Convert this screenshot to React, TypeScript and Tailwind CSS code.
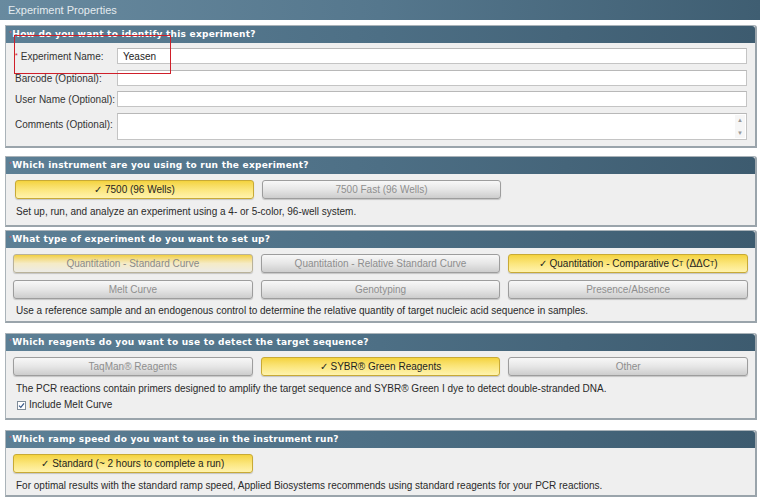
import React from "react";

type Variant = "yellow" | "pale" | "gray";

const variants: Record<Variant, string> = {
  yellow:
    "border-[#c8aa36] bg-linear-to-b from-[#f4d33c] via-[#fbe67c] to-[#fff3ad] text-[#1e1e1e]",
  pale: "border-[#b9b29a] bg-linear-to-b from-[#f2cf3a] via-[#f5ebc6] to-[#ecebe6] text-[#8a8a8a]",
  gray: "border-[#9d9d9d] bg-linear-to-b from-[#f8f8f8] via-[#e6e6e6] to-[#cdcdcd] text-[#8e8e8e]",
};

function Btn({ children, variant = "gray" }: { children: React.ReactNode; variant?: Variant }) {
  return (
    <div
      className={`h-[19px] rounded-[3px] border flex items-center justify-center text-[10px] shadow-[0_1px_1px_rgba(0,0,0,0.18)] ${variants[variant]}`}
    >
      {children}
    </div>
  );
}

function Panel({
  title,
  children,
  className = "",
}: {
  title: string;
  children: React.ReactNode;
  className?: string;
}) {
  return (
    <section
      className={`ml-[5px] mr-[3px] border border-[#aab3b9] border-r-2 border-b-2 border-r-[#9aa4ab] border-b-[#9aa4ab] bg-[#efefef] rounded-tr-[3px] ${className}`}
    >
      <div className="h-[17px] flex items-center pl-[3px] bg-linear-to-r from-[#5c7f95] via-[#4d6f85] to-[#3d5b6f] rounded-tr-[3px]">
        <span className="text-[#e0566a] text-[6px] leading-none mr-[1px] -mt-[4px]">*</span>
        <span className="font-['DejaVu_Sans',Verdana,sans-serif] font-bold text-[9px] text-white tracking-[0.25px]">
          {title}
        </span>
      </div>
      {children}
    </section>
  );
}

function Field({ label, tall, className = "" }: { label: string; tall?: boolean; className?: string }) {
  return (
    <div className={`flex ${tall ? "items-start" : "items-center"} ${className}`}>
      <div className={`w-[102px] text-[10px] text-[#333] ${tall ? "pt-[4px]" : ""}`}>{label}</div>
      <div
        className={`flex-1 bg-white border border-[#c4c4c4] border-t-[#b8b8b8] ${tall ? "h-[27px] relative" : "h-[16px]"}`}
      >
        {tall ? (
          <div className="absolute right-[1px] top-[1px] bottom-[1px] w-[10px] flex flex-col justify-between items-center text-[#999] text-[6px] leading-[10px] bg-[#f6f6f6]">
            <span>▲</span>
            <span>▼</span>
          </div>
        ) : null}
      </div>
    </div>
  );
}

function Desc({ children }: { children: React.ReactNode }) {
  return <p className="pl-[3px] text-[10px] leading-[14px] text-[#2a2a2a]">{children}</p>;
}

export default function App() {
  return (
    <div className="relative w-[760px] h-[498px] overflow-hidden bg-white font-['Liberation_Sans',Arial,sans-serif]">
      {/* title bar */}
      <div className="h-[20px] flex items-center pl-[8px] bg-linear-to-r from-[#688a9f] via-[#55778d] to-[#3f5e72]">
        <span className="text-[11px] text-[#e4ebef]">Experiment Properties</span>
      </div>

      {/* identify */}
      <Panel title="How do you want to identify this experiment?" className="mt-[5px]">
        <div className="pl-[9px] pr-[8px] pt-[5px] pb-[6px] flex flex-col">
          <div className="flex items-center">
            <div className="w-[102px] text-[10px] text-[#333] flex items-center">
              <span className="text-[#d0202a] text-[7px] mr-[3px]">*</span>
              Experiment Name:
            </div>
            <div className="flex-1 h-[16px] bg-white border border-[#c4c4c4] border-t-[#b8b8b8] flex items-center pl-[5px] text-[10px] text-[#222]">
              Yeasen
            </div>
          </div>
          <Field label="Barcode (Optional):" className="mt-[6px]" />
          <Field label="User Name (Optional):" className="mt-[5px]" />
          <Field label="Comments (Optional):" tall className="mt-[6px]" />
        </div>
      </Panel>

      {/* instrument */}
      <Panel title="Which instrument are you using to run the experiment?" className="mt-[8px]">
        <div className="px-[7px] pt-[6px] pb-[6px]">
          <div className="grid grid-cols-3 gap-x-[8px] pl-[2px]">
            <Btn variant="yellow">✓ 7500 (96 Wells)</Btn>
            <Btn>7500 Fast (96 Wells)</Btn>
          </div>
          <div className="mt-[6px]">
            <Desc>Set up, run, and analyze an experiment using a 4- or 5-color, 96-well system.</Desc>
          </div>
        </div>
      </Panel>

      {/* experiment type */}
      <Panel title="What type of experiment do you want to set up?" className="mt-[3px]">
        <div className="px-[7px] pt-[6px] pb-[3px]">
          <div className="grid grid-cols-3 gap-x-[8px] gap-y-[7px]">
            <Btn variant="pale">Quantitation - Standard Curve</Btn>
            <Btn>Quantitation - Relative Standard Curve</Btn>
            <Btn variant="yellow">
              ✓ Quantitation - Comparative C<span className="text-[7px] mt-[2px]">T</span>&nbsp;(ΔΔC
              <span className="text-[7px] mt-[2px]">T</span>)
            </Btn>
            <Btn>Melt Curve</Btn>
            <Btn>Genotyping</Btn>
            <Btn>Presence/Absence</Btn>
          </div>
          <div className="mt-[5px]">
            <Desc>
              Use a reference sample and an endogenous control to determine the relative quantity of target nucleic
              acid sequence in samples.
            </Desc>
          </div>
        </div>
      </Panel>

      {/* reagents */}
      <Panel title="Which reagents do you want to use to detect the target sequence?" className="mt-[10px]">
        <div className="px-[7px] pt-[6px] pb-[6px]">
          <div className="grid grid-cols-3 gap-x-[8px]">
            <Btn>TaqMan® Reagents</Btn>
            <Btn variant="yellow">✓ SYBR® Green Reagents</Btn>
            <Btn>Other</Btn>
          </div>
          <div className="mt-[6px]">
            <Desc>
              The PCR reactions contain primers designed to amplify the target sequence and SYBR® Green I dye to
              detect double-stranded DNA.
            </Desc>
          </div>
          <label className="mt-[2px] pl-[4px] flex items-center gap-[3px] text-[10px] leading-[14px] text-[#2a2a2a]">
            <span className="w-[9px] h-[9px] border border-[#7f8c98] bg-white flex items-center justify-center">
              <svg width="7" height="7" viewBox="0 0 7 7">
                <path d="M1 3.6 L2.8 5.4 L6 1.4" fill="none" stroke="#3a5a8a" strokeWidth="1.3" />
              </svg>
            </span>
            Include Melt Curve
          </label>
        </div>
      </Panel>

      {/* ramp speed */}
      <Panel title="Which ramp speed do you want to use in the instrument run?" className="mt-[10px]">
        <div className="px-[7px] pt-[6px] pb-[2px]">
          <div className="grid grid-cols-3 gap-x-[8px]">
            <Btn variant="yellow">✓ Standard (~ 2 hours to complete a run)</Btn>
          </div>
          <div className="mt-[6px]">
            <Desc>
              For optimal results with the standard ramp speed, Applied Biosystems recommends using standard reagents
              for your PCR reactions.
            </Desc>
          </div>
        </div>
      </Panel>

      {/* annotation box */}
      <div className="absolute left-[14px] top-[35px] w-[157px] h-[39px] border-[1.5px] border-[#cf1f2a]" />
    </div>
  );
}
